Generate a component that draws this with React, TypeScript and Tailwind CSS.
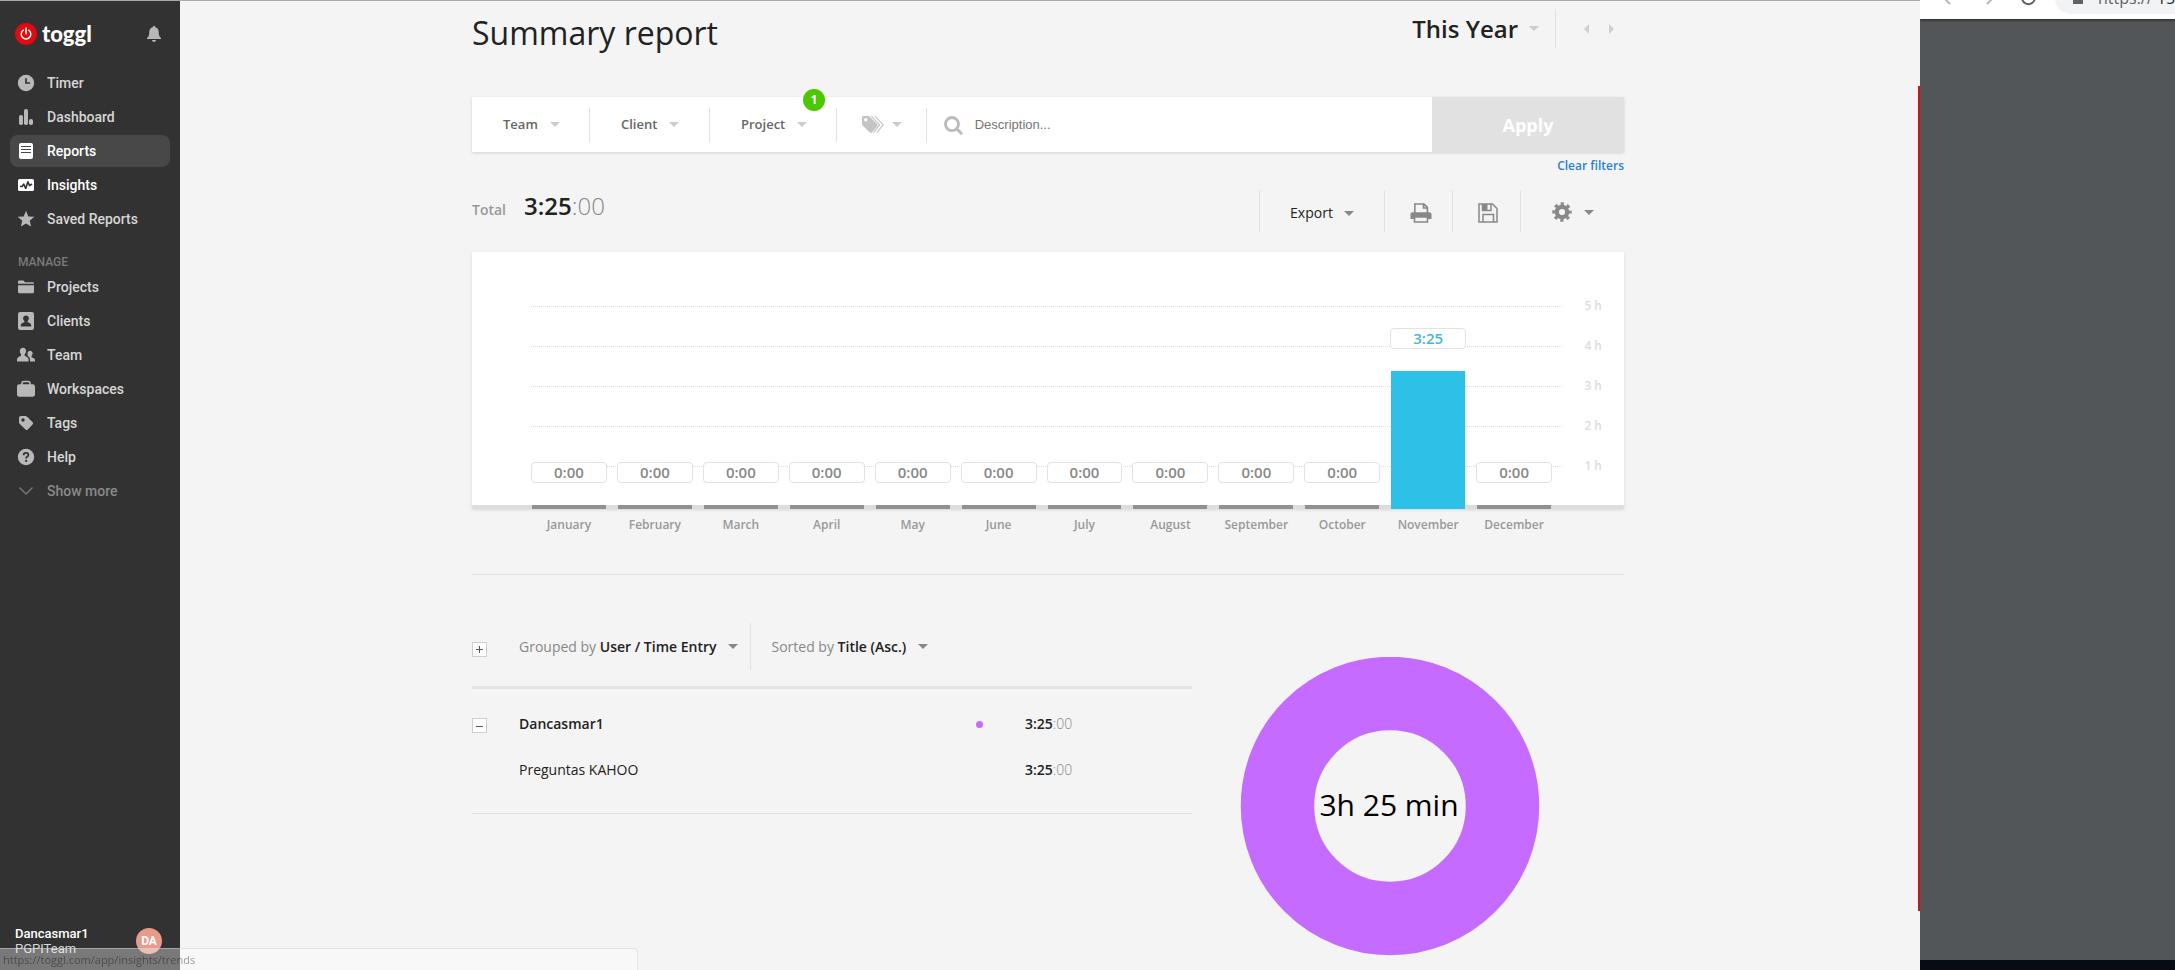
import type { ReactNode } from "react";

type NavItem = { label: string; icon: ReactNode; tone?: "active" | "bright" | "muted" };

const svg = (children: ReactNode, size = 18) => (
  <svg width={size} height={size} viewBox="0 0 18 18" fill="currentColor" aria-hidden="true">
    {children}
  </svg>
);

const mainNav: NavItem[] = [
  {
    label: "Timer",
    icon: svg(
      <>
        <circle cx="9" cy="9" r="8.2" />
        <path d="M9 4.2V9h4" fill="none" stroke="#323232" strokeWidth="1.7" />
      </>
    ),
  },
  {
    label: "Dashboard",
    icon: svg(
      <>
        <rect x="2" y="7" width="4" height="10" rx="1.8" />
        <rect x="7" y="1" width="4" height="16" rx="1.8" />
        <rect x="12" y="11" width="4" height="6" rx="1.8" />
      </>
    ),
  },
  {
    label: "Reports",
    tone: "active",
    icon: svg(
      <>
        <rect x="2" y="1" width="14" height="16" rx="2" />
        <path d="M4 4.5h10M4 7.5h10M4 10.5h10" stroke="#484848" strokeWidth="1.2" />
      </>
    ),
  },
  {
    label: "Insights",
    tone: "bright",
    icon: svg(
      <>
        <rect x="1" y="3" width="16" height="12" rx="1.6" />
        <path
          d="M3 10.5h2l1.7-2.3 2 4.2 2.2-6.6 1.7 3.8L15 8"
          fill="none"
          stroke="#323232"
          strokeWidth="1.6"
          strokeLinejoin="round"
        />
      </>
    ),
  },
  {
    label: "Saved Reports",
    icon: svg(<path d="M9 .8l2.3 5.6 6 .4-4.600 3.900 1.500 5.900L9 13.400l-5.200 3.200 1.500-5.900L.7 6.800l6-.4z" />),
  },
];

const manageNav: NavItem[] = [
  {
    label: "Projects",
    icon: svg(
      <path d="M1 4.200V3.800C1 3 1.600 2.500 2.400 2.500h4.200L8 4.200h7.800c.7 0 1.200.5 1.200 1v.6H1zM1 7.200h16v6.600c0 .9-.6 1.500-1.500 1.500h-13c-.9 0-1.500-.6-1.500-1.500z" />
    ),
  },
  {
    label: "Clients",
    icon: svg(
      <>
        <rect x="1" y="0" width="16" height="18" rx="2.200" />
        <path d="M9 3.400c1.700 0 2.900 1.200 2.900 2.900 0 1.200-.6 2.100-1.300 2.800v1.100c1.800.5 3.600 1.400 3.600 3v1.200H3.800v-1.200c0-1.600 1.800-2.500 3.600-3V9.100C6.700 8.400 6.100 7.500 6.100 6.300c0-1.700 1.200-2.900 2.900-2.900z" fill="#323232" />
      </>
    ),
  },
  {
    label: "Team",
    icon: svg(
      <>
        <path d="M6 1.800c1.900 0 3.100 1.300 3.100 3.200 0 1.300-.6 2.400-1.400 3.100v1.700c2 .8 3.900 1.700 3.900 3.800v2H0v-2c0-2.100 2-3 4-3.800V8.100C3.300 7.400 2.800 6.300 2.800 5 2.800 3.100 4.100 1.800 6 1.800z" />
        <path d="M13 4.800c1.500 0 2.600 1.100 2.600 2.600 0 1-.5 1.900-1.100 2.500v1.300c1.700.5 3.500 1.200 3.500 3v1.400h-5v-2c0-1.700-.9-2.800-2.400-3.800V7.400c0-1.500 1-2.600 2.400-2.600z" />
      </>
    ),
  },
  {
    label: "Workspaces",
    icon: svg(
      <>
        <path d="M5 5.500V3.300C5 2.200 5.700 1.500 6.800 1.500h4.400c1.100 0 1.800.7 1.800 1.800v2.200" fill="none" stroke="currentColor" strokeWidth="1.600" />
        <rect x="0" y="4.200" width="18" height="12.600" rx="2.400" />
      </>
    ),
  },
  {
    label: "Tags",
    icon: svg(
      <path fillRule="evenodd" d="M2 4.200C2 2.900 2.900 2 4.200 2h4.300c.5 0 1 .2 1.400.6l5.700 5.700c.7.7.7 1.600 0 2.300l-4.800 4.800c-.7.7-1.600.7-2.300 0L2.600 9.700C2.200 9.300 2 8.900 2 8.300zM6 7.700A1.700 1.700 0 1 0 6 4.300a1.700 1.700 0 0 0 0 3.400z" />
    ),
  },
  {
    label: "Help",
    icon: svg(
      <>
        <circle cx="9" cy="9" r="8.200" />
        <path d="M6.600 7.200c0-1.500 1-2.400 2.400-2.400s2.400.9 2.400 2.100c0 1.600-2.300 1.700-2.300 3.500" fill="none" stroke="#323232" strokeWidth="1.700" />
        <circle cx="9.100" cy="12.900" r="1.100" fill="#323232" />
      </>
    ),
  },
  {
    label: "Show more",
    tone: "muted",
    icon: svg(<path d="M2.500 5.500L9 12l6.500-6.500" fill="none" stroke="currentColor" strokeWidth="1.500" />),
  },
];

const toneClass = {
  active: "bg-[#484848] text-white",
  bright: "text-white",
  muted: "text-[#8a8a8a]",
  normal: "text-[#d6d6d6]",
};

const iconTone = {
  active: "text-white",
  bright: "text-white",
  muted: "text-[#777777]",
  normal: "text-[#b8b8b8]",
};

function NavList({ items }: { items: NavItem[] }) {
  return (
    <ul className="flex flex-col gap-[2px] px-[10px]">
      {items.map(({ label, icon, tone = "normal" }) => (
        <li key={label}>
          <a
            href="#"
            className={`flex h-8 items-center gap-3 rounded-lg pl-[7px] text-sm font-medium ${toneClass[tone]}`}
          >
            <span className={iconTone[tone]}>{icon}</span>
            {label}
          </a>
        </li>
      ))}
    </ul>
  );
}

function Sidebar() {
  return (
    <aside className="flex w-[180px] shrink-0 flex-col bg-[#323232] font-['Roboto',sans-serif]">
      <div className="flex h-[67px] items-center justify-between pr-[19px] pl-[15px]">
        <a href="#" className="flex items-center gap-[5px] text-white">
          <svg width="22" height="22" viewBox="0 0 22 22" aria-hidden="true">
            <circle cx="11" cy="11" r="11" fill="#e00a10" />
            <path d="M8.300 7.200a4.800 4.800 0 1 0 5.400 0M11 5v5.800" fill="none" stroke="#fff" strokeWidth="1.500" strokeLinecap="round" />
          </svg>
          <span className="font-['Lato',sans-serif] text-[22px] leading-[22px] font-black">toggl</span>
        </a>
        <button type="button" aria-label="Notifications" className="text-[#b8b8b8]">
          <svg width="14" height="16" viewBox="0 0 14 16" fill="currentColor" aria-hidden="true">
            <path d="M7 0c.7 0 1.200.5 1.200 1.200 2.100.5 3.500 2.200 3.500 4.600 0 3.700.7 5.200 2.300 6.200v1H0v-1c1.600-1 2.300-2.500 2.300-6.200 0-2.400 1.400-4.100 3.500-4.600C5.800.5 6.300 0 7 0zM5 14h4c-.2 1.200-1 1.900-2 1.900S5.200 15.200 5 14z" />
          </svg>
        </button>
      </div>
      <nav className="flex flex-col">
        <NavList items={mainNav} />
        <h2 className="mt-[18px] pl-[18px] text-xs leading-[18px] font-medium text-[#7a7a7a]">MANAGE</h2>
        <NavList items={manageNav} />
      </nav>
      <div className="mt-auto flex items-center justify-between pr-[18px] pb-[14px] pl-[15px]">
        <p className="text-[13px] leading-[15px] text-[#d6d6d6]">
          <span className="block font-medium text-white">Dancasmar1</span>
          PGPITeam
        </p>
        <span className="flex size-[26px] items-center justify-center rounded-full bg-[#e99a8b] text-xs font-bold text-white">
          DA
        </span>
      </div>
    </aside>
  );
}

function Caret({ className = "text-[#cccccc]" }: { className?: string }) {
  return (
    <svg className={className} width="10" height="5" viewBox="0 0 10 5" fill="currentColor" aria-hidden="true">
      <path d="M0 0h10L5 5z" />
    </svg>
  );
}

function FilterButton({ label, className, badge }: { label: string; className: string; badge?: number }) {
  return (
    <button
      type="button"
      className={`relative flex h-[34px] items-center gap-3 border-r border-[#e2e2e2] pl-[31px] text-[13px] font-semibold text-[#666666] ${className}`}
    >
      {label}
      <Caret />
      {badge !== undefined && (
        <span className="absolute -top-[19px] right-[11px] flex size-[22px] items-center justify-center rounded-full bg-[#4bc800] text-xs font-bold text-white">
          {badge}
        </span>
      )}
    </button>
  );
}

function FilterBar() {
  return (
    <form className="flex h-[55px] items-center bg-white shadow-[0_1px_3px_rgba(0,0,0,0.14)]">
      <FilterButton label="Team" className="w-[118px]" />
      <FilterButton label="Client" className="w-[120px]" />
      <FilterButton label="Project" className="w-[127px]" badge={1} />
      <button
        type="button"
        aria-label="Tags"
        className="flex h-[34px] w-[90px] items-center gap-2 border-r border-[#e2e2e2] pl-[25px] text-[#c4c4c4]"
      >
        <svg width="22" height="18" viewBox="0 0 22 18" fill="currentColor" aria-hidden="true">
          <path fillRule="evenodd" d="M0 1.500C0 .6.600 0 1.500 0h4.600c.7 0 1.200.2 1.700.7l7.400 7.400c.6.6.6 1.500 0 2.100l-5.300 6.200c-.6.6-1.500.6-2.100 0L.7 9.400C.2 8.900 0 8.400 0 7.700zM3.800 5.500a1.700 1.700 0 1 0 0-3.400 1.700 1.700 0 0 0 0 3.400z" />
          <path d="M9.300.4l8.300 8.300-6 8M13 .4l8.200 8.300-6.300 8" fill="none" stroke="currentColor" strokeWidth="1.200" />
        </svg>
        <Caret />
      </button>
      <label className="flex h-full flex-1 items-center gap-3 pl-[17px]">
        <svg className="text-[#bbbbbb]" width="20" height="20" viewBox="0 0 20 20" fill="none" stroke="currentColor" aria-hidden="true">
          <circle cx="8.500" cy="9" r="7" strokeWidth="3" />
          <path d="M13.500 14l4.800 4.800" strokeWidth="3.200" strokeLinecap="round" />
        </svg>
        <input
          type="text"
          aria-label="Description"
          placeholder="Description..."
          className="w-full bg-transparent font-['Liberation_Sans',sans-serif] text-[13px] text-[#555555] outline-none placeholder:text-[#757575]"
        />
      </label>
      <button type="submit" className="h-full w-[192px] bg-[#e1e1e1] text-lg font-bold text-white">
        Apply
      </button>
    </form>
  );
}

function Toolbar() {
  const cell = "flex h-[42px] items-center justify-center border-l border-[#e2e2e2] pt-1";
  return (
    <div className="mt-4 flex h-[42px] items-center justify-between">
      <p className="flex items-baseline gap-[18px]">
        <span className="text-sm font-semibold text-[#999999]">Total</span>
        <span className="-mt-3 text-2xl font-semibold text-[#222222]">
          3:25<span className="font-light text-[#888888]">:00</span>
        </span>
      </p>
      <div className="flex text-[#888888]">
        <button type="button" className={`${cell} w-[125px] gap-[11px] text-sm text-[#222222]`}>
          Export <Caret className="text-[#888888]" />
        </button>
        <button type="button" aria-label="Print" className={`${cell} w-[68px] pl-1`}>
          <svg width="22" height="20" viewBox="0 0 22 20" fill="none" stroke="currentColor" strokeWidth="1.600" aria-hidden="true">
            <path d="M4.800 10V1h9.200l3.400 3.400V10M13.500 1v4h4" />
            <path d="M.500 11.500C.500 10 1.300 9.200 2.500 9.200h17c1.200 0 2 .8 2 2.300V16h-17H.500z" fill="currentColor" stroke="none" />
            <path d="M4.500 14h13V19h-13z" fill="#f4f4f4" />
          </svg>
        </button>
        <button type="button" aria-label="Save report" className={`${cell} w-[68px] pl-[2px]`}>
          <svg width="20" height="20" viewBox="0 0 20 20" fill="none" stroke="currentColor" strokeWidth="1.500" aria-hidden="true">
            <path d="M1 1h13.500L19 5.500V19H1z" />
            <path d="M4.500 1v6.500h8.500V1M5 19v-7.500h10.500V19" />
            <path d="M5 1h4.500v6.500H5z" fill="currentColor" stroke="none" />
          </svg>
        </button>
        <button type="button" aria-label="Settings" className={`${cell} w-[104px] gap-3 pb-[2px]`}>
          <svg width="20" height="20" viewBox="0 0 20 20" fill="none" stroke="currentColor" aria-hidden="true">
            <circle cx="10" cy="10" r="5.200" strokeWidth="4.200" />
            <circle cx="10" cy="10" r="8" strokeWidth="3.400" strokeDasharray="3.142 3.142" strokeDashoffset="1.571" />
          </svg>
          <Caret className="text-[#888888]" />
        </button>
      </div>
    </div>
  );
}

const months = [
  "January", "February", "March", "April", "May", "June",
  "July", "August", "September", "October", "November", "December",
].map((name) => (name === "November" ? { name, label: "3:25", minutes: 205 } : { name, label: "0:00", minutes: 0 }));

function Chart() {
  return (
    <section aria-label="Hours per month" className="mt-5">
      <div className="relative h-[257px] border-b-4 border-[#dddddd] bg-white shadow-[0_1px_3px_rgba(0,0,0,0.12)]">
        <div className="absolute inset-x-0 top-[45px] flex flex-col gap-[22px] pr-[22px] pl-[59px]">
          {[5, 4, 3, 2, 1].map((hour) => (
            <div key={hour} className="flex h-[18px] items-center gap-[22px] text-xs font-semibold text-[#dddddd]">
              <span className="flex-1 border-t border-dotted border-[#dcdcdc]" />
              {hour} h
            </div>
          ))}
        </div>
        <div className="absolute inset-x-0 top-0 -bottom-1 flex items-end gap-3 pr-[73px] pl-[60px]">
          {months.map(({ name, label, minutes }) => (
            <div key={name} className="flex flex-1 flex-col gap-[22px]">
              <span
                className={`-mx-px flex h-[21px] items-center justify-center rounded border border-[#e2e2e2] bg-white text-[15px] font-semibold ${
                  minutes ? "text-[#45b8d8]" : "text-[#888888]"
                }`}
              >
                {label}
              </span>
              <span
                className={minutes ? "bg-[#2dc1e8]" : "bg-[#919191]"}
                style={{ height: 4 + Math.round((minutes / 60) * 39.3) }}
              />
            </div>
          ))}
        </div>
      </div>
      <ul className="flex gap-3 pt-[7px] pr-[73px] pl-[60px] text-xs leading-[18px] font-semibold text-[#999999]">
        {months.map(({ name }) => (
          <li key={name} className="flex flex-1 justify-center">
            {name}
          </li>
        ))}
      </ul>
    </section>
  );
}

function ToggleBox({ open }: { open: boolean }) {
  return (
    <button
      type="button"
      aria-label={open ? "Collapse" : "Expand"}
      className="flex size-[15px] items-center justify-center border border-[#cfcfcf] bg-white text-[#555555]"
    >
      <svg width="7" height="7" viewBox="0 0 7 7" stroke="currentColor" aria-hidden="true">
        <path d={open ? "M0 4.500h7" : "M0 3.500h7M3.500 0v7"} />
      </svg>
    </button>
  );
}

function Duration() {
  return (
    <span className="font-semibold text-[#222222]">
      3:25<span className="font-light text-[#888888]">:00</span>
    </span>
  );
}

function Entries() {
  return (
    <div className="w-[720px]">
      <div className="flex h-[47px] items-center">
        <div className="w-[47px] pt-[6px]">
          <ToggleBox open={false} />
        </div>
        <button type="button" className="flex h-full items-center gap-3 border-r border-[#e2e2e2] pr-3 text-sm text-[#888888]">
          <span>
            Grouped by <span className="font-semibold text-[#222222]">User / Time Entry</span>
          </span>
          <Caret className="text-[#888888]" />
        </button>
        <button type="button" className="flex h-full items-center gap-3 pl-5 text-sm text-[#888888]">
          <span>
            Sorted by <span className="font-semibold text-[#222222]">Title (Asc.)</span>
          </span>
          <Caret className="text-[#888888]" />
        </button>
      </div>
      <table className="mt-4 w-full table-fixed border-t-[3px] border-b border-t-[#e3e3e3] border-b-[#e0e0e0] text-left text-sm text-[#222222]">
        <colgroup>
          <col className="w-[47px]" />
          <col />
          <col className="w-[49px]" />
          <col className="w-[167px]" />
        </colgroup>
        <tbody>
          <tr className="h-[72px]">
            <td className="pt-[3px]">
              <ToggleBox open />
            </td>
            <th scope="row" className="font-semibold">Dancasmar1</th>
            <td>
              <span className="block size-[7px] rounded-full bg-[#c56bff]" />
            </td>
            <td>
              <Duration />
            </td>
          </tr>
          <tr className="h-[54px] align-top">
            <td />
            <th scope="row" className="font-normal">Preguntas KAHOO</th>
            <td />
            <td>
              <Duration />
            </td>
          </tr>
        </tbody>
      </table>
    </div>
  );
}

function Donut() {
  return (
    <svg className="mt-[34px] ml-12 shrink-0" width="300" height="300" viewBox="0 0 300 300" role="img" aria-label="3h 25 min">
      <circle cx="150" cy="149" r="112.500" fill="none" stroke="#c56bff" strokeWidth="73.500" />
      <text x="149" y="159" textAnchor="middle" className="fill-black font-['Open_Sans',sans-serif] text-[30px]">
        3h 25 min
      </text>
    </svg>
  );
}

function Report() {
  return (
    <main className="relative min-w-0 flex-1 overflow-hidden bg-[#f4f4f4] pr-1">
      <div className="mx-auto w-full max-w-[1152px]">
        <header className="flex h-[97px] justify-between">
          <h1 className="pt-[11px] text-[32px] leading-[44px] text-[#222222]">Summary report</h1>
          <div className="flex h-[39px] pt-[9px]">
            <button type="button" className="flex h-[39px] items-center gap-[11px] border-r border-[#e2e2e2] pr-4 text-2xl font-semibold text-[#222222]">
              This Year <Caret />
            </button>
            <div className="flex h-[39px] items-center gap-5 pr-[10px] pl-7 text-[#cfcfcf]">
              <button type="button" aria-label="Previous period">
                <svg width="5" height="10" viewBox="0 0 5 10" fill="currentColor" aria-hidden="true"><path d="M5 0v10L0 5z" /></svg>
              </button>
              <button type="button" aria-label="Next period">
                <svg width="5" height="10" viewBox="0 0 5 10" fill="currentColor" aria-hidden="true"><path d="M0 0v10l5-5z" /></svg>
              </button>
            </div>
          </div>
        </header>
        <FilterBar />
        <div className="flex h-[22px] items-end justify-end text-xs font-semibold text-[#2a7fd4]">
          <a href="#">Clear filters</a>
        </div>
        <Toolbar />
        <Chart />
        <hr className="mt-10 border-[#e2e2e2]" />
        <div className="flex items-start pt-12">
          <Entries />
          <Donut />
        </div>
      </div>
      <span className="absolute top-[86px] right-0 h-[825px] w-[2px] bg-[#c81616]" />
    </main>
  );
}

function BackgroundWindow() {
  return (
    <aside aria-label="Browser window" className="flex w-[255px] shrink-0 flex-col overflow-hidden bg-[#525659]">
      <div className="-mt-[23px] flex h-[42px] shrink-0 items-center bg-white pl-[22px] text-[#5f6368] shadow-[0_1px_3px_rgba(0,0,0,0.6)]">
        <svg className="shrink-0 text-[#b5b8bb]" width="16" height="16" viewBox="0 0 16 16" fill="none" stroke="currentColor" strokeWidth="2" aria-hidden="true">
          <path d="M15 7H2M8 0L1 7l7 7" />
        </svg>
        <svg className="ml-[21px] shrink-0 text-[#b5b8bb]" width="16" height="16" viewBox="0 0 16 16" fill="none" stroke="currentColor" strokeWidth="2" aria-hidden="true">
          <path d="M1 7h13M8 0l7 7-7 7" />
        </svg>
        <svg className="ml-[25px] shrink-0" width="16" height="16" viewBox="0 0 16 16" fill="none" stroke="currentColor" strokeWidth="2" aria-hidden="true">
          <path d="M13 3a6.500 6.500 0 1 0 1.800 6M14.500 0v5h-5" />
        </svg>
        <div className="ml-[19px] flex h-8 min-w-0 flex-1 items-center rounded-l-full bg-[#f1f3f4] pl-[18px] whitespace-nowrap">
          <svg className="shrink-0" width="10" height="14" viewBox="0 0 10 14" fill="currentColor" aria-hidden="true">
            <path d="M0 5h10v8H0z" />
            <path d="M2.500 5V3a2.500 2.500 0 0 1 5 0v2" fill="none" stroke="currentColor" strokeWidth="1.400" />
          </svg>
          <span className="ml-[15px] font-['Open_Sans',sans-serif] text-base leading-5">
            https:// <span className="text-[#202124]">150</span>
          </span>
        </div>
      </div>
      <div className="mt-auto h-[10px] bg-[#070b12]" />
    </aside>
  );
}

export default function App() {
  return (
    <div className="flex h-screen overflow-hidden font-['Open_Sans',sans-serif]">
      <div className="relative flex min-w-0 flex-1">
        <Sidebar />
        <Report />
        <span className="absolute inset-x-0 top-0 h-px bg-[#a9a9a9]" />
      </div>
      <BackgroundWindow />
      <div className="fixed bottom-0 left-0 h-[22px] w-[638px] rounded-tr border-t border-r border-[#d0d0d0]/50 bg-white/35 pl-[3px] text-[11px] leading-[22px] text-black/40">
        https://toggl.com/app/insights/trends
      </div>
    </div>
  );
}
